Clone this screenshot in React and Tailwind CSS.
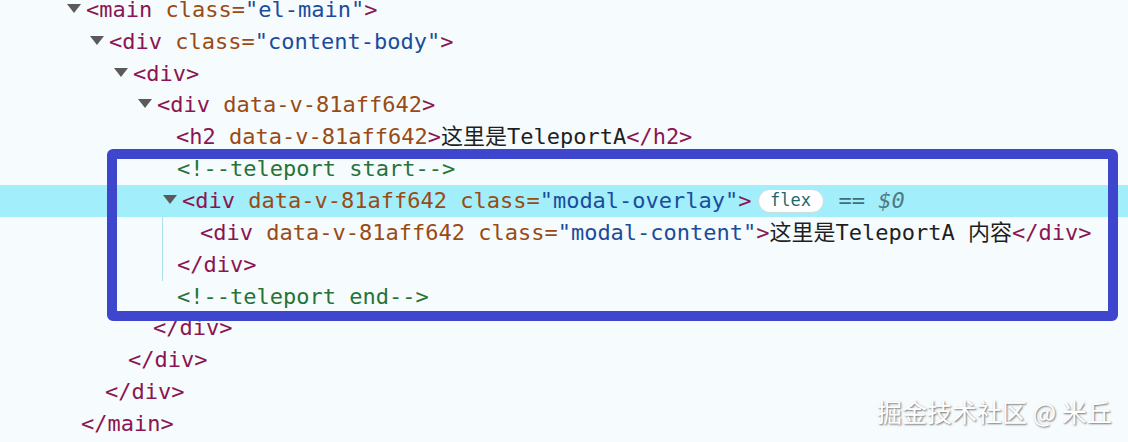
import React from "react";

const Tri = () => (
  <svg width="14" height="9" viewBox="0 0 14 9" className="shrink-0 mr-[5px] -mt-[3px]">
    <polygon points="0,0 14,0 7,9" fill="#5a5a5a" />
  </svg>
);

const T = ({ children }) => <span className="text-[#8b1552]">{children}</span>;
const A = ({ children }) => <span className="text-[#9a4a14]">{children}</span>;
const V = ({ children }) => <span className="text-[#1b4c9c]">{children}</span>;
const C = ({ children }) => <span className="text-[#26733a]">{children}</span>;
const X = ({ children }) => <span className="text-[#1f1f1f]">{children}</span>;

const Row = ({ className = "", children }) => (
  <div className={"flex items-center h-[31.85px] whitespace-pre " + className}>{children}</div>
);

export default function App() {
  return (
    <div className="relative w-[1128px] h-[442px] overflow-hidden bg-[#f6fbfd] font-['DejaVu_Sans_Mono','Noto_Sans_CJK_SC',monospace] text-[22px] leading-none">
      <div className="-mt-[6px]">
        <Row className="pl-[67px]">
          <Tri />
          <T>&lt;main </T>
          <A>class=</A>
          <V>"el-main"</V>
          <T>&gt;</T>
        </Row>
        <Row className="pl-[90px]">
          <Tri />
          <T>&lt;div </T>
          <A>class=</A>
          <V>"content-body"</V>
          <T>&gt;</T>
        </Row>
        <Row className="pl-[114px]">
          <Tri />
          <T>&lt;div&gt;</T>
        </Row>
        <Row className="pl-[138px]">
          <Tri />
          <T>&lt;div </T>
          <A>data-v-81aff642</A>
          <T>&gt;</T>
        </Row>
        <Row className="pl-[176px]">
          <T>&lt;h2 </T>
          <A>data-v-81aff642</A>
          <T>&gt;</T>
          <X>这里是TeleportA</X>
          <T>&lt;/h2&gt;</T>
        </Row>
        <Row className="pl-[177px]">
          <C>&lt;!--teleport start--&gt;</C>
        </Row>
        <Row className="pl-[163px] bg-[#a2eefa]">
          <Tri />
          <T>&lt;div </T>
          <A>data-v-81aff642 class=</A>
          <V>"modal-overlay"</V>
          <T>&gt;</T>
          <span className="ml-[6px] mr-[15px] flex items-center justify-center w-[66px] h-[24px] rounded-full bg-white border border-[#c9dde2] text-[17px] text-[#1d6a70]">
            flex
          </span>
          <span className="text-[#3c6f7a]">== </span>
          <span className="text-[#4f7984] italic">$0</span>
        </Row>
        <div className="ml-[162px] border-l border-[#a9e4ee]">
          <Row className="pl-[37px]">
            <T>&lt;div </T>
            <A>data-v-81aff642 class=</A>
            <V>"modal-content"</V>
            <T>&gt;</T>
            <X>这里是TeleportA 内容</X>
            <T>&lt;/div&gt;</T>
          </Row>
          <Row className="pl-[14px]">
            <T>&lt;/div&gt;</T>
          </Row>
        </div>
        <Row className="pl-[177px]">
          <C>&lt;!--teleport end--&gt;</C>
        </Row>
        <Row className="pl-[153px]">
          <T>&lt;/div&gt;</T>
        </Row>
        <Row className="pl-[128px]">
          <T>&lt;/div&gt;</T>
        </Row>
        <Row className="pl-[105px]">
          <T>&lt;/div&gt;</T>
        </Row>
        <Row className="pl-[81px]">
          <T>&lt;/main&gt;</T>
        </Row>
      </div>

      <div className="absolute left-[107px] top-[149px] w-[1011px] h-[172px] border-[10px] border-[#3d46cc] rounded-[6px]" />

      <div className="absolute left-[877px] top-[396px] font-['Noto_Sans_CJK_SC',sans-serif] text-[25px] leading-[30px] text-white whitespace-nowrap [text-shadow:1px_1px_2px_rgba(0,0,0,0.55)]">
        掘金技术社区 @ 米丘
      </div>
    </div>
  );
}
